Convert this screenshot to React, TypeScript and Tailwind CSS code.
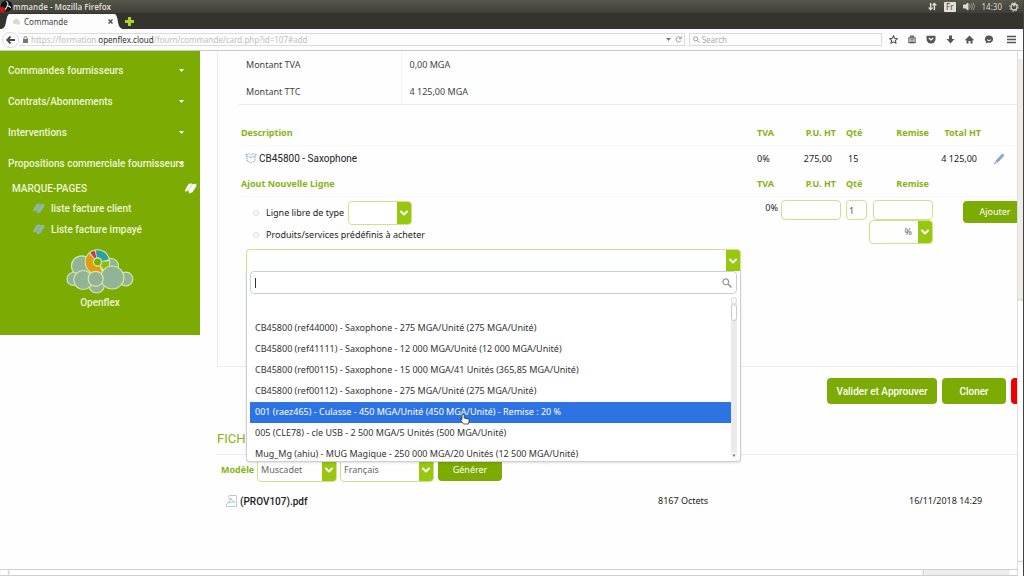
import React from "react";
import { ArrowDownUp } from "lucide-react";

const products = [
  "",
  "CB45800 (ref44000) - Saxophone - 275 MGA/Unité (275 MGA/Unité)",
  "CB45800 (ref41111) - Saxophone - 12 000 MGA/Unité (12 000 MGA/Unité)",
  "CB45800 (ref00115) - Saxophone - 15 000 MGA/41 Unités (365,85 MGA/Unité)",
  "CB45800 (ref00112) - Saxophone - 275 MGA/Unité (275 MGA/Unité)",
  "001 (raez465) - Culasse - 450 MGA/Unité (450 MGA/Unité) - Remise : 20 %",
  "005 (CLE78) - cle USB - 2 500 MGA/5 Unités (500 MGA/Unité)",
  "Mug_Mg (ahiu) - MUG Magique - 250 000 MGA/20 Unités (12 500 MGA/Unité)",
];

const menu = [
  "Commandes fournisseurs",
  "Contrats/Abonnements",
  "Interventions",
  "Propositions commerciale fournisseurs",
];

function Chevron() {
  return (
    <span className="pointer-events-none flex w-[14px] shrink-0 items-center justify-center bg-[#97c80f]">
      <svg width="10" height="8" viewBox="0 0 10 8" fill="none" stroke="#fff" strokeWidth="2" strokeLinecap="round" strokeLinejoin="round">
        <path d="M2 2.5 5 5.5 8 2.5" />
      </svg>
    </span>
  );
}

function Select({ label, value, className }: { label: string; value: string; className: string }) {
  return (
    <span className={"inline-flex overflow-hidden rounded border border-[#cfe28a] bg-white " + className}>
      <select aria-label={label} className="min-w-0 flex-1 appearance-none bg-transparent px-[3px] text-[9px] text-[#666] outline-none">
        <option>{value}</option>
      </select>
      <Chevron />
    </span>
  );
}

function Bookmark({ color }: { color: string }) {
  return (
    <svg width="13" height="11" viewBox="0 0 13 11" fill={color}>
      <path d="M4.8 .8 8.300 .4 4.500 7.300 1.100 8.800 1.300 6.600z" />
      <path d="M9 1 12.400.7 12.200 3.400 8.400 9.200 4.800 10.400 5.200 8z" />
      <path d="M7.500 1.200 9.600 1 5.800 8.400 3.600 8.600z" opacity=".7" />
    </svg>
  );
}

const slices = [
  { color: "#2c9fa3", from: -98, size: 84 },
  { color: "#c4365f", from: -128, size: 24 },
  { color: "#e39a0d", from: 66, size: 158 },
  { color: "#8cbd10", from: -4, size: 54 },
];

function Cloud() {
  const b = { fill: "#93b397", stroke: "#d3e8a8", strokeWidth: 1.2 };
  return (
    <svg width="68" height="46" viewBox="0 0 68 46">
      <circle cx="15.700" cy="17" r="10.200" {...b} />
      <circle cx="45" cy="17" r="7.500" {...b} />
      <circle cx="7.500" cy="30" r="6.500" {...b} />
      <circle cx="60" cy="30" r="6.800" {...b} />
      <circle cx="30.700" cy="36.500" r="7.500" {...b} />
      <circle cx="31.500" cy="13" r="12.800" fill="#d3e8a8" />
      {slices.map((s) => (
        <circle
          key={s.color}
          cx="31.500"
          cy="13"
          r="8.200"
          fill="none"
          stroke={s.color}
          strokeWidth="7"
          pathLength={360}
          strokeDasharray={`${s.size} ${360 - s.size}`}
          transform={`rotate(${s.from} 31.5 13)`}
        />
      ))}
      <circle cx="31.500" cy="13" r="4" fill="#7cab03" stroke="#d3e8a8" />
      <circle cx="17.300" cy="31" r="9.500" {...b} />
      <circle cx="46.300" cy="28.500" r="11.500" {...b} />
      <circle cx="29.700" cy="29.800" r="7.500" {...b} />
    </svg>
  );
}

function TitleBar() {
  return (
    <div className="flex h-[13px] items-center bg-gradient-to-b from-[#57564c] to-[#403f39] text-[#dfdbd2]">
      <svg width="13" height="13" viewBox="0 0 13 13" className="shrink-0">
        <circle cx="6.500" cy="6" r="5.800" fill="#111" />
        <path d="M6 1.500a2.200 2.200 0 0 1 1 4M3 9a2.200 2.200 0 0 0 3.500-2M10.500 8a2.200 2.200 0 0 0-4-1" fill="none" stroke="#ddd" strokeWidth="1.200" />
        <circle cx="2.500" cy="9.500" r="2.500" fill="#e30b0b" />
      </svg>
      <span className="text-[8px] leading-3 font-semibold">mmande - Mozilla Firefox</span>
      <div className="ml-auto flex items-center gap-[7px] pr-1">
        <ArrowDownUp size={9} strokeWidth={4} />
        <span className="rounded-[1px] bg-[#e4e0d8] px-[2px] text-[8px] leading-[10px] text-[#45443d]">Fr</span>
        <svg width="12" height="9" viewBox="0 0 12 9" fill="none" stroke="#dfdbd2">
          <path d="M.5 3h2L5 1v7L2.500 6h-2z" fill="#dfdbd2" />
          <path d="M6.500 2.500q1.500 2 0 4M8.300 1.500q2.200 3 0 6M10 .7q3 3.800 0 7.600" strokeWidth=".8" opacity=".7" />
        </svg>
        <span className="text-[8px] leading-3">14:30</span>
        <svg width="10" height="10" viewBox="0 0 10 10" fill="none" stroke="#dfdbd2">
          <circle cx="5" cy="5" r="3" strokeWidth="1.300" />
          <circle cx="5" cy="5" r="4.300" strokeWidth="1" strokeDasharray="1.500 1.880" />
          <path d="M5 1v3.500" strokeWidth="1.400" />
        </svg>
      </div>
    </div>
  );
}

function TabBar() {
  return (
    <div className="flex h-[16px] items-end bg-[#34332e]">
      <svg width="8" height="15" viewBox="0 0 8 15" className="ml-[1px]"><path d="M0 15Q4 15 5 8T8 0V15z" fill="#fdfdfd" /></svg>
      <div className="flex h-[15px] w-[106px] items-center bg-[#fdfdfd] pl-[3px] text-[8px] text-[#444]">
        <svg width="9" height="7" viewBox="0 0 9 7" className="mr-[3px]">
          <circle cx="3" cy="4" r="2.200" fill="#d5dcd2" /><circle cx="6" cy="4.500" r="2.200" fill="#d5dcd2" /><circle cx="4.500" cy="2" r="1.500" fill="#e9cf9e" />
        </svg>
        Commande
        <svg width="5" height="5" viewBox="0 0 5 5" className="mr-[2px] ml-auto" stroke="#555" strokeWidth="1.500"><path d="M.5.5l4 4M4.500.5l-4 4" /></svg>
      </div>
      <svg width="8" height="15" viewBox="0 0 8 15"><path d="M8 15Q4 15 3 8T0 0V15z" fill="#fdfdfd" /></svg>
      <button aria-label="Nouvel onglet" className="mb-[3px] ml-[2px]">
        <svg width="9" height="9" viewBox="0 0 9 9"><path d="M3 0h3v3h3v3H6v3H3V6H0V3h3z" fill="#a6d82c" /></svg>
      </button>
    </div>
  );
}

function ToolBar() {
  return (
    <div className="flex h-[22px] items-center border-b border-[#c9c9c9] bg-[#fdfdfd] pr-[7px] text-[8px]">
      <button aria-label="Précédent" className="ml-[2px] flex h-[16px] w-[17px] shrink-0 items-center justify-center rounded-full border border-[#ddd]">
        <svg width="9" height="8" viewBox="0 0 9 8" fill="none" stroke="#4a4a4a" strokeWidth="2"><path d="M9 4H1.500M4.500.6 1.300 4l3.200 3.400" /></svg>
      </button>
      <div className="flex h-[13px] flex-1 items-center border border-l-0 border-[#dcdcdc] pl-1 text-[#c0c0c0]">
        <svg width="5" height="7" viewBox="0 0 5 7" className="mr-[3px]"><path d="M0 3h5v4H0z" fill="#777" /><path d="M1 3V2a1.500 1.500 0 0 1 3 0v1" fill="none" stroke="#777" /></svg>
        <span>https://formation.<span className="text-[#333]">openflex.cloud</span>/fourn/commande/card.php?id=107#add</span>
        <svg width="5" height="3" viewBox="0 0 5 3" className="ml-auto" fill="#777"><path d="M0 0h5L2.500 3z" /></svg>
        <svg width="7" height="7" viewBox="0 0 7 7" className="mr-[2px] ml-1" fill="none" stroke="#999"><path d="M5.500 1.600A2.600 2.600 0 1 0 6 4.500M6.300.3v2.400H4" /></svg>
      </div>
      <label className="ml-1 flex h-[13px] w-[193px] items-center border border-[#dcdcdc] px-[3px]">
        <svg width="7" height="7" viewBox="0 0 7 7" fill="none" stroke="#999"><circle cx="2.800" cy="2.800" r="2.200" /><path d="M4.500 4.500 7 7" /></svg>
        <input aria-label="Search" placeholder="Search" className="ml-[2px] w-full min-w-0 bg-transparent outline-none placeholder:text-[#aaa]" />
      </label>
      <div className="ml-[7px] flex items-center gap-[10px] text-[#555]">
        <svg width="9" height="9" viewBox="0 0 10 10" fill="none" stroke="currentColor" strokeWidth="1.200"><path d="m5 .8 1.300 2.800 3 .4-2.200 2.100.6 3L5 7.600 2.300 9.100l.6-3L.7 4l3-.4z" /></svg>
        <svg width="8" height="9" viewBox="0 0 9 9" fill="none" stroke="currentColor"><path d="M1 2.500h7v5.500H1zM3 2V.7h3V2M2.500 4.300h4M2.500 6.200h4" strokeWidth="1.200" /></svg>
        <svg width="10" height="9" viewBox="0 0 10 9"><path d="M.5.8h9V4a4.500 4.500 0 0 1-9 0z" fill="currentColor" /><path d="m2.800 3 2.200 2 2.200-2" fill="none" stroke="#fff" strokeWidth="1.200" /></svg>
        <svg width="9" height="9" viewBox="0 0 9 9" fill="currentColor"><path d="M3 .5h3V4h2.500l-4 4.500L.5 4H3z" /></svg>
        <svg width="9" height="9" viewBox="0 0 9 9" fill="currentColor"><path d="M4.500.5 9 5l-.7.5-.8-.7v3.700H5.500V6h-2v2.500h-2V4.800l-.8.700L0 5z" /></svg>
        <svg width="10" height="9" viewBox="0 0 9 9"><path d="M4.500.5a4 3.600 0 1 1-1.200 7L1 8.500l.6-1.700A3.600 3.600 0 0 1 4.500.5z" fill="currentColor" /><path d="M2.500 4.700q2 2 4 0" fill="none" stroke="#fff" /></svg>
        <svg width="9" height="9" viewBox="0 0 9 9" className="ml-[3px]" stroke="currentColor" strokeWidth="1.600"><path d="M0 1.500h9M0 4.500h9M0 7.500h9" /></svg>
      </div>
    </div>
  );
}

function Sidebar() {
  return (
    <nav className="h-[284px] w-[200px] shrink-0 bg-[#7cab03] pt-1 font-['Roboto',sans-serif] text-[10px] font-medium text-[#eef5d8]">
      <ul>
        {menu.map((m) => (
          <li key={m} className="relative">
            <a href="#" className="flex h-[31px] items-center pl-2 whitespace-nowrap">{m}</a>
            <svg width="5" height="3" viewBox="0 0 5 3" fill="#fff" className="absolute top-[14px] right-4"><path d="M0 0h5L2.500 3z" /></svg>
          </li>
        ))}
      </ul>
      <div className="flex h-[18px] items-center justify-between pr-[3px] pl-3">
        MARQUE-PAGES
        <Bookmark color="#fff" />
      </div>
      <ul className="pt-[1px] pl-8">
        <li><a href="#" className="flex h-[21px] items-center gap-[6px]"><Bookmark color="#8fb7a8" />liste facture client</a></li>
        <li><a href="#" className="flex h-[21px] items-center gap-[6px]"><Bookmark color="#8fb7a8" />Liste facture impayé</a></li>
      </ul>
      <div className="flex flex-col items-center pt-[9px]">
        <Cloud />
        <span>Openflex</span>
      </div>
    </nav>
  );
}

function ProductPicker() {
  return (
    <div className="relative mt-1 mr-4">
      <div className="flex h-[23px] justify-end overflow-hidden rounded-t border border-b-0 border-[#cfe28a] bg-white"><Chevron /></div>
      <div className="absolute inset-x-0 top-[22px] z-10 rounded-b border border-t-0 border-[#ccd0d3] bg-white px-[3px] pb-[2px] shadow-sm">
        <label className="flex h-[23px] items-center rounded border border-[#c3d2da] px-1">
          <span className="h-[10px] w-px bg-[#333]" />
          <input aria-label="Rechercher un produit" className="min-w-0 flex-1 outline-none" />
          <svg width="10" height="10" viewBox="0 0 10 10" fill="none" stroke="#999" strokeWidth="1.300"><circle cx="3.800" cy="3.800" r="2.900" /><path d="M6 6 9.300 9.300" strokeWidth="1.700" /></svg>
        </label>
        <div className="mt-[3px] flex h-[162px] overflow-hidden">
          <ul role="listbox" aria-label="Produits" className="min-w-0 flex-1 overflow-hidden">
            {products.map((p, i) => (
              <li
                key={i}
                role="option"
                aria-selected={i === 5}
                className={i === 5 ? "relative h-[21px] bg-[#2e73e2] pl-[5px] leading-[19px] text-white" : "h-[21px] pl-[5px] leading-[19px] text-[#333]"}
              >
                {p}
                {i === 5 && (
                  <svg width="10" height="11" viewBox="0 0 10 11" className="absolute top-[12px] left-[210px]">
                    <path d="M3 .5q1.200 0 1.200 1V4l4 .9q1 .3.900 1.500L8.600 10H3.500L.8 6.500q0-1.300 1.200-.7V1.500q0-1 1-1z" fill="#fff" stroke="#333" strokeWidth=".8" />
                  </svg>
                )}
              </li>
            ))}
          </ul>
          <div className="flex w-[6px] flex-col items-center rounded-sm bg-[#ebebeb]">
            <span className="h-[7px] w-full rounded-full border border-[#ddd] bg-white" />
            <span className="h-[17px] w-full rounded-sm border border-[#ccc] bg-white" />
            <svg width="6" height="7" viewBox="0 0 6 7" className="mt-auto"><rect width="6" height="7" rx="3" fill="#f8f8f8" /><path d="M1.500 2.500h3L3 5z" fill="#777" /></svg>
          </div>
        </div>
      </div>
    </div>
  );
}

const field = "h-[20px] rounded border border-[#cfe28a] bg-white text-[9px] text-[#555] outline-none";
const radio = "size-[6px] appearance-none rounded-full border border-[#ddd]";

function Lines() {
  return (
    <table className="mt-4 ml-[23px] w-[calc(100%-23px)] table-fixed border-collapse text-left">
      <colgroup>
        <col />
        <col className="w-[24px]" />
        <col className="w-[64px]" />
        <col className="w-[24px]" />
        <col className="w-[64px]" />
        <col className="w-[56px]" />
        <col className="w-[28px]" />
      </colgroup>
      <tbody>
        <tr className="h-[25px] border-b border-[#f8f8f8] text-[9px] text-[#86b414]">
          <th className="font-bold">Description</th>
          <th className="font-bold">TVA</th>
          <th className="pr-[9px] text-right font-bold">P.U. HT</th>
          <th className="pl-[1px] font-bold">Qté</th>
          <th className="pr-1 text-right font-bold">Remise</th>
          <th className="pr-2 text-right font-bold whitespace-nowrap">Total HT</th>
          <th />
        </tr>
        <tr className="h-[26px] text-[#222]">
          <td>
            <a href="#" className="flex items-center gap-[2px] pl-1 font-['Roboto',sans-serif] text-[10px]">
              <svg width="12" height="11" viewBox="0 0 12 11" fill="#fff" stroke="#86a8cc" strokeWidth=".9"><path d="m6 4.500-4-1.300V8L6 9.800 10 8V3.200zM2 3.200.5 1.800 4.500.8 6 2.300 7.500.8l4 1L10 3.200" strokeDasharray="2 .6" /></svg>
              CB45800 - Saxophone
            </a>
          </td>
          <td>0%</td>
          <td className="pr-[13px] text-right">275,00</td>
          <td className="pl-[3px]">15</td>
          <td />
          <td className="pr-3 text-right whitespace-nowrap">4 125,00</td>
          <td>
            <button aria-label="Modifier" className="ml-1 block">
              <svg width="12" height="12" viewBox="0 0 12 12"><path d="M9.300.5 11.500 2.300 4.700 9.800 2.300 8z" fill="#7fa6d6" /><path d="m2 8.500 2 1.500L.8 11.400z" fill="#9aa6b8" /></svg>
            </button>
          </td>
        </tr>
        <tr className="h-[25px] border-b border-[#f8f8f8] text-[9px] text-[#86b414]">
          <th className="font-bold">Ajout Nouvelle Ligne</th>
          <th className="font-bold">TVA</th>
          <th className="pr-[9px] text-right font-bold">P.U. HT</th>
          <th className="pl-[1px] font-bold">Qté</th>
          <th className="pr-1 text-right font-bold">Remise</th>
          <th />
          <th />
        </tr>
        <tr className="align-top text-[#222]">
          <td className="pt-1 pl-[5px]">
            <div className="flex h-6 items-center">
              <label className="flex items-center gap-[7px] pl-[7px]"><input type="radio" name="kind" className={radio} />Ligne libre de type</label>
              <Select label="Type de ligne" value="" className="ml-1 h-6 w-[64px]" />
            </div>
            <label className="flex h-[20px] items-center gap-[7px] pl-[7px]"><input type="radio" name="kind" className={radio} />Produits/services prédéfinis à acheter</label>
            <ProductPicker />
          </td>
          <td className="pt-1 pr-[3px] text-right">0%</td>
          <td className="pt-[3px]"><input aria-label="P.U. HT" className={"block w-[60px] px-1 " + field} /></td>
          <td className="pt-[3px]"><input aria-label="Qté" defaultValue="1" className={"ml-[1px] block w-[21px] px-[2px] " + field} /></td>
          <td className="pt-[3px]">
            <input aria-label="Remise" className={"ml-1 block w-[60px] px-1 " + field} />
            <span className="flex h-6 overflow-hidden rounded border border-[#cfe28a]">
              <select aria-label="Unité de remise" className="min-w-0 flex-1 appearance-none pr-[6px] text-right text-[9px] text-[#666] outline-none [text-align-last:right]"><option>%</option></select>
              <Chevron />
            </span>
          </td>
          <td colSpan={2} className="pt-1 pl-[30px]">
            <button className="h-[22px] w-16 rounded bg-[#7cab03] text-[9px] text-white">Ajouter</button>
          </td>
        </tr>
      </tbody>
    </table>
  );
}

function Main() {
  return (
    <main className="ml-[17px] min-w-0 flex-1 overflow-hidden">
      <section className="h-[316px] border-b border-l border-[#ececec]">
        <table className="ml-5 w-[calc(100%-20px)] border-b border-[#ececec] text-[#444]">
          <tbody>
            <tr className="h-7"><th className="w-[163px] border-r border-[#f4f4f4] pl-2 text-left font-normal">Montant TVA</th><td className="pl-2">0,00 MGA</td></tr>
            <tr className="h-[25px]"><th className="border-r border-[#f4f4f4] pl-2 text-left font-normal">Montant TTC</th><td className="pl-2">4 125,00 MGA</td></tr>
          </tbody>
        </table>
        <Lines />
      </section>
      <div className="mt-[11px] -mr-[58px] flex justify-end gap-[5px] font-['Roboto',sans-serif] text-[10px] font-medium text-white">
        <button className="h-[26px] w-[110px] rounded bg-[#7cab03]">Valider et Approuver</button>
        <button className="h-[26px] w-16 rounded bg-[#7cab03]">Cloner</button>
        <button aria-label="Supprimer" className="h-[26px] w-16 rounded bg-[#ee0000]" />
      </div>
      <h2 className="mt-[25px] h-[26px] border-b border-[#ececec] font-['Roboto',sans-serif] text-[13px] leading-5 text-[#86b414]">FICH</h2>
      <div className="mt-[3px] flex items-start pl-1">
        <span className="w-[36px] text-[9px] leading-6 font-bold text-[#86b414]">Modèle</span>
        <Select label="Modèle" value="Muscadet" className="h-6 w-[80px]" />
        <Select label="Langue" value="Français" className="ml-[3px] h-6 w-[94px]" />
        <button className="ml-1 h-[23px] w-16 rounded bg-[#7cab03] text-[9px] text-white">Générer</button>
      </div>
      <div className="mt-[7px] flex h-6 items-center pl-[9px] text-[#222]">
        <svg width="11" height="12" viewBox="0 0 11 12" fill="none" stroke="#b9cbd8"><path d="M3 .5h7.500v11H.5V9M3 .5V5M1 8q4-1 4-5 1 4 4 4-4 0-8 1z" /></svg>
        <a href="#" className="ml-[3px] flex-1 font-['Roboto',sans-serif] text-[10px] font-medium">(PROV107).pdf</a>
        <span className="w-[251px]">8167 Octets</span>
        <span className="w-[108px]">16/11/2018 14:29</span>
      </div>
    </main>
  );
}

export default function App() {
  return (
    <div className="flex h-screen flex-col overflow-hidden border-r border-[#44433d] bg-[#fefefe] font-['Noto_Sans',sans-serif] text-[9px]">
      <TitleBar />
      <TabBar />
      <ToolBar />
      <div className="flex min-h-0 flex-1">
        <div className="flex min-w-0 flex-1 flex-col">
          <div className="flex min-h-0 flex-1 overflow-hidden">
            <Sidebar />
            <Main />
          </div>
          <div className="flex h-[7px] shrink-0 border-y border-[#cfcfcf] bg-[#ededed]">
            <span className="w-2 rounded-full bg-white" />
            <span className="w-[916px] rounded-full border-x border-[#ccc] bg-white" />
            <span className="ml-auto w-2 rounded-full bg-white" />
          </div>
        </div>
        <div className="flex w-[6px] shrink-0 flex-col border-l border-[#dcdcdc] bg-[#eeedeb]">
          <span className="h-2 bg-white" />
          <span className="mt-[240px] flex-1 rounded-full border-t border-b border-[#ccc] bg-white" />
          <span className="h-[14px] bg-white" />
        </div>
      </div>
    </div>
  );
}
